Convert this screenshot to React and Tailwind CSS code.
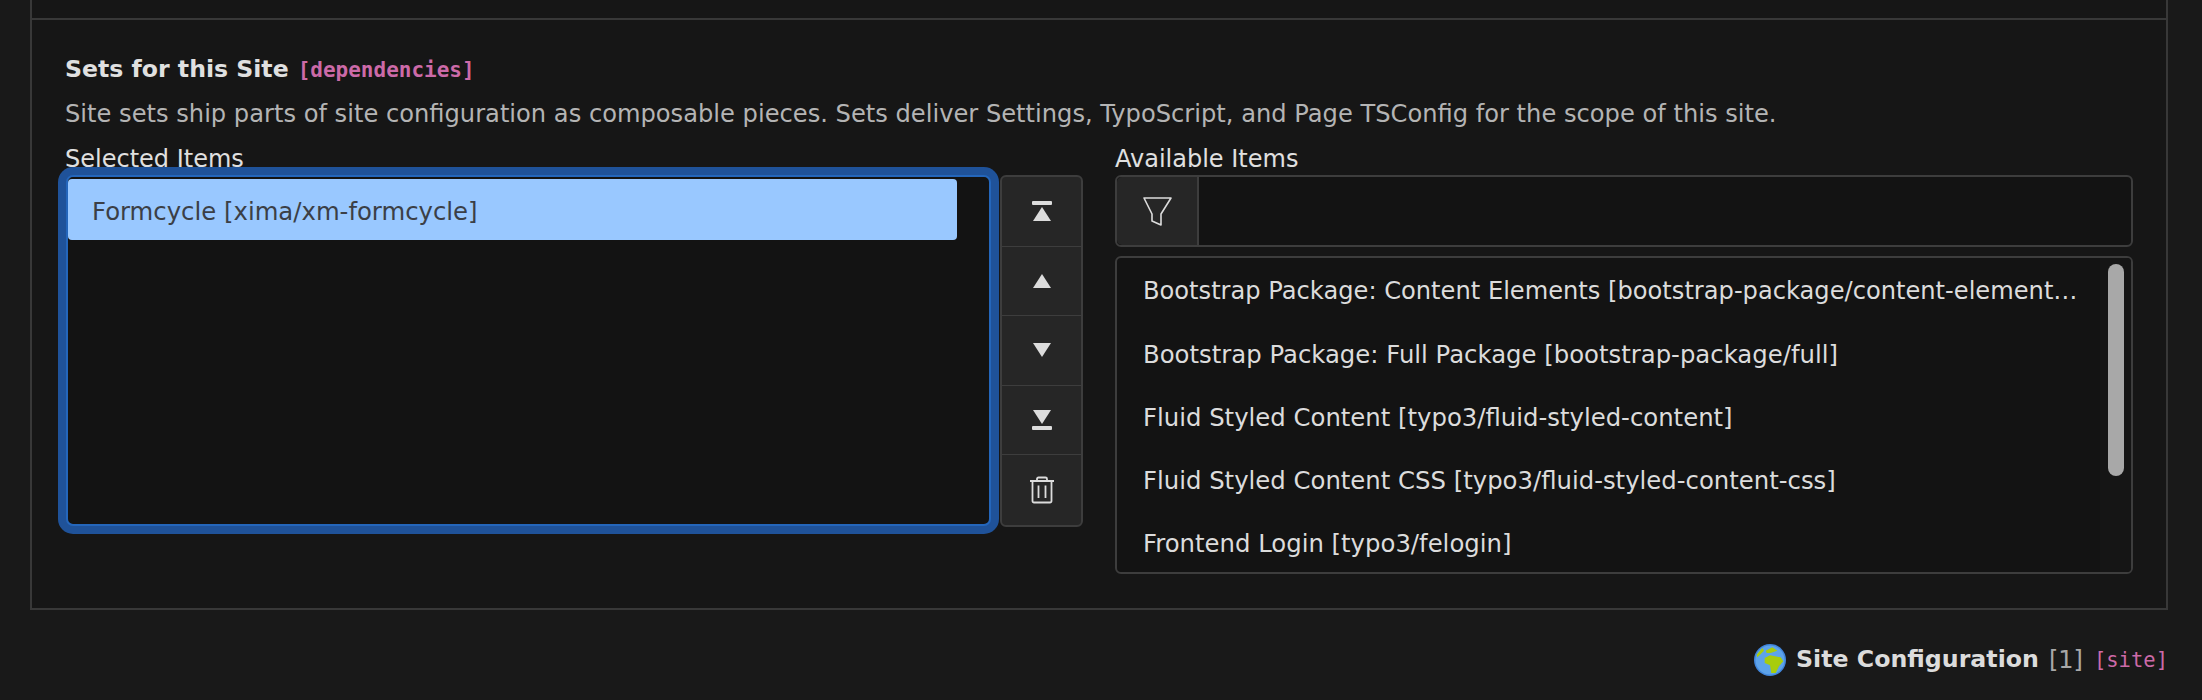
const availableItems = [
    'Bootstrap Package: Content Elements [bootstrap-package/content-element…',
    'Bootstrap Package: Full Package [bootstrap-package/full]',
    'Fluid Styled Content [typo3/fluid-styled-content]',
    'Fluid Styled Content CSS [typo3/fluid-styled-content-css]',
    'Frontend Login [typo3/felogin]',
];

function Globe() {
    return (
        <svg width="32" height="32" viewBox="0 0 32 32" className="shrink-0">
            <circle cx="16" cy="16" r="16" fill="#4186dc" />
            <circle cx="16" cy="16" r="14.500" fill="#5da3ea" />
            <path d="M10.700 14L16 11.300l10.700 2 2.600 4-4.300 5-3.300 6.700h-4.400L16 21.300 10.700 19z" fill="#a8cc0c" />
            <path d="M11.700 6.700L18.300 3.300l5 3.400-6.600 2.300h-4z" fill="#a8cc0c" />
            <path d="M2.700 10.700L8.300 4l1.700 2.700-4 4-2.700 2.600z" fill="#a8cc0c" />
        </svg>
    );
}

function MoveButton({ children, last }) {
    return (
        <button type="button" className={`h-[70px] flex items-center justify-center text-[#dcdcdc] ${last ? '' : 'border-b border-[#3d3d3d]'}`}>
            {children}
        </button>
    );
}

export default function App() {
    return (
        <div className="h-[700px] overflow-hidden bg-[#191919] pl-[30px] pr-[34px] font-['DejaVu_Sans',sans-serif] text-[24px] text-[#dcdcdc]">
            <div className="h-[610px] border-x-2 border-b-2 border-[#383838] bg-[#161616]">
                <div className="h-[20px] border-b-2 border-[#383838]" />
                <div className="px-[33px] pt-[34px]">
                    <div className="flex items-baseline gap-[9px] h-[30px] leading-[30px]">
                        <span className="font-bold text-[23.6px] text-[#e0e0e0]">Sets for this Site</span>
                        <span className="font-['DejaVu_Sans_Mono',monospace] font-bold text-[21px] text-[#cc6aa8]">[dependencies]</span>
                    </div>
                    <p className="mt-[14px] text-[24.17px] leading-[32px] text-[#b4b4b4] whitespace-nowrap">Site sets ship parts of site configuration as composable pieces. Sets deliver Settings, TypoScript, and Page TSConfig for the scope of this site.</p>
                    <div className="mt-[16px] flex gap-[32px]">
                        <div className="w-[1018px] shrink-0">
                            <div className="h-[26px] leading-[26px] text-[#e0e0e0]">Selected Items</div>
                            <div className="flex mt-[3px]">
                                <div className="relative z-10 ml-[1px] w-[925px] h-[351px] shrink-0 rounded-[7px] border-2 border-[#2466bb] bg-[#131313] pt-[2px] shadow-[0_0_0_8px_#1f5299]">
                                    <div className="w-[889px] h-[61px] rounded-[4px] bg-[#99c8ff] pl-[24px] text-[24.35px] leading-[66px] text-[#3b3f46]">Formcycle [xima/xm-formcycle]</div>
                                </div>
                                <div className="ml-[9px] w-[84px] h-[352px] rounded-[6px] border-2 border-[#3d3d3d] bg-[#262626] flex flex-col">
                                    <MoveButton>
                                        <svg width="20" height="20" viewBox="0 0 20 20" fill="currentColor"><rect x="0" y="0" width="20" height="4" rx="1" /><path d="M10 6l9 14H1z" /></svg>
                                    </MoveButton>
                                    <MoveButton>
                                        <svg width="20" height="14" viewBox="0 0 20 14" fill="currentColor"><path d="M10 0l9 14H1z" /></svg>
                                    </MoveButton>
                                    <MoveButton>
                                        <svg width="20" height="14" viewBox="0 0 20 14" fill="currentColor"><path d="M10 14L1 0h18z" /></svg>
                                    </MoveButton>
                                    <MoveButton>
                                        <svg width="20" height="20" viewBox="0 0 20 20" fill="currentColor"><path d="M10 14L1 0h18z" /><rect x="0" y="16" width="20" height="4" rx="1" /></svg>
                                    </MoveButton>
                                    <MoveButton last>
                                        <svg width="26" height="28" viewBox="0 0 26 28" fill="none" stroke="currentColor" strokeWidth="1.800"><path d="M1 5h24M8 5V3a1.500 1.500 0 0 1 1.500-1.500h7A1.500 1.500 0 0 1 18 3v2M3.500 5v20a1.500 1.500 0 0 0 1.500 1.500h16a1.500 1.500 0 0 0 1.500-1.500V5M9.500 9.500v12.500M16.500 9.500v12.500" /></svg>
                                    </MoveButton>
                                </div>
                            </div>
                        </div>
                        <div className="flex-1 min-w-0">
                            <div className="h-[26px] leading-[26px] text-[#e0e0e0]">Available Items</div>
                            <div className="mt-[3px] h-[72px] flex rounded-[6px] border-2 border-[#3d3d3d] bg-[#131313]">
                                <div className="w-[82px] rounded-l-[5px] bg-[#262626] border-r-2 border-[#3d3d3d] flex items-center justify-center">
                                    <svg width="30" height="30" viewBox="0 0 30 30" fill="none" stroke="currentColor" strokeWidth="1.600" strokeLinejoin="round"><path d="M2 2h27l-10 16v11l-9-4v-7z" /></svg>
                                </div>
                            </div>
                            <div className="mt-[9px] h-[318px] flex rounded-[6px] border-2 border-[#3d3d3d] bg-[#131313] overflow-hidden">
                                <div className="flex-1 min-w-0 pt-[2px]">
                                    {availableItems.map((item) => (
                                        <div key={item} className="h-[63px] pl-[26px] pr-[12px] text-[24.35px] first:text-[24.15px] leading-[63px] truncate text-[#dcdcdc]">{item}</div>
                                    ))}
                                </div>
                                <div className="w-[31px] shrink-0 bg-[#151515] pl-[8px] pt-[6px]">
                                    <div className="w-[16px] h-[212px] rounded-full bg-[#a8a8a8]" />
                                </div>
                            </div>
                        </div>
                    </div>
                </div>
            </div>
            <div className="mt-[34px] flex items-center justify-end gap-[10px] h-[32px]">
                <Globe />
                <span className="font-bold text-[23.7px] text-[#dcdcdc]">Site Configuration</span>
                <span className="text-[#a8a8a8]">[1]</span>
                <span className="ml-[1px] font-['DejaVu_Sans_Mono',monospace] text-[20.5px] text-[#cc6aa8]">[site]</span>
            </div>
        </div>
    );
}
